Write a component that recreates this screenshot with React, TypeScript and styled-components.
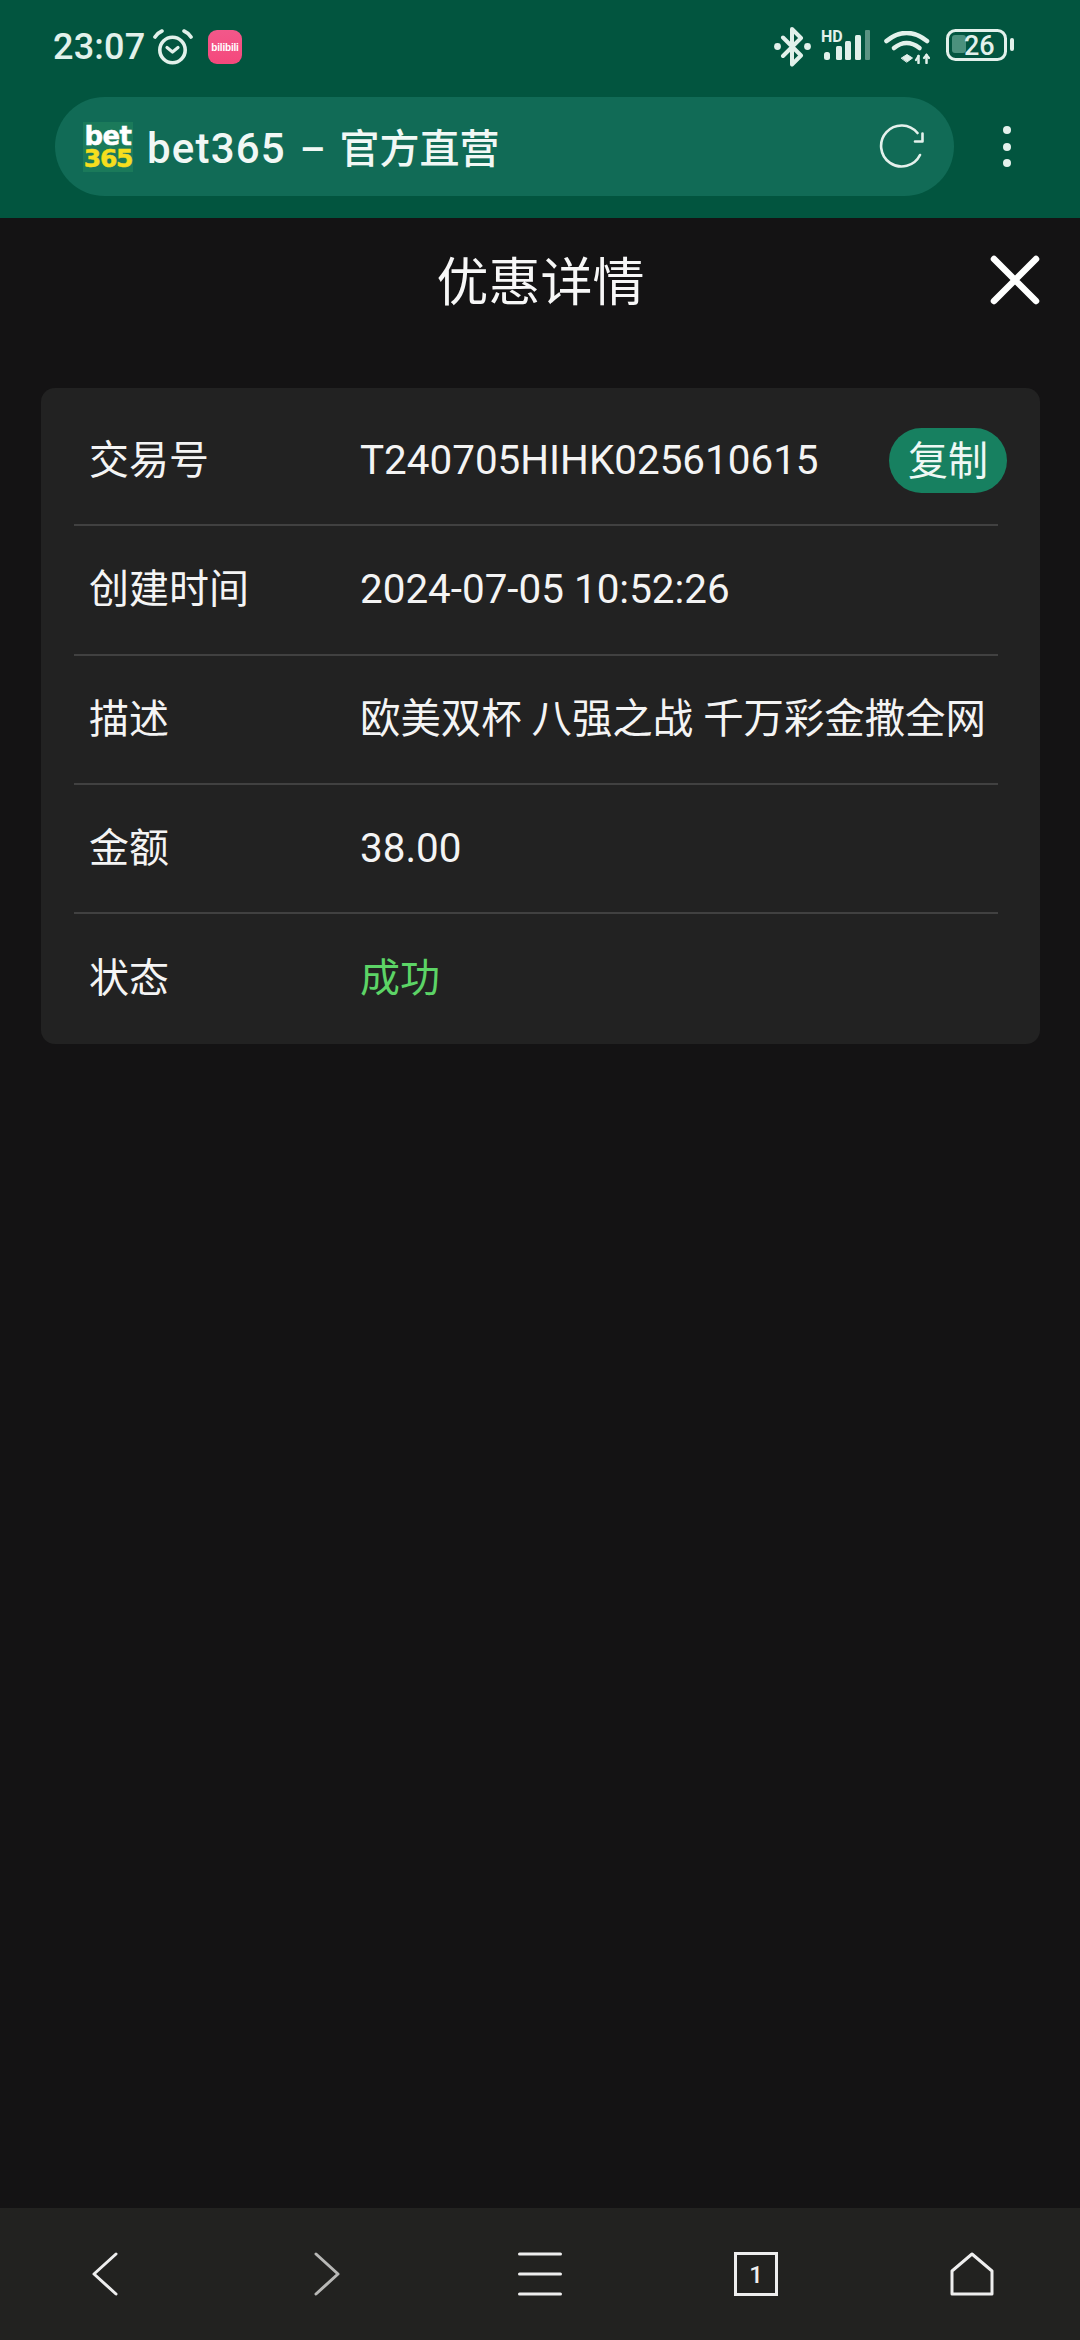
import React from "react";
import styled, { createGlobalStyle } from "styled-components";

const GlobalStyle = createGlobalStyle`
  html, body {
    margin: 0;
    padding: 0;
    background: #141314;
  }
  * {
    box-sizing: border-box;
  }
`;

const Page = styled.div`
  width: 1080px;
  height: 2340px;
  display: flex;
  flex-direction: column;
  background: #141314;
  color: #f4f4f4;
  font-family: Roboto, "Noto Sans CJK SC", sans-serif;
`;

const TopBar = styled.header`
  height: 218px;
  flex: none;
  background: #02553f;
`;

const StatusBar = styled.div`
  height: 97px;
  display: flex;
  align-items: center;
  justify-content: space-between;
  padding: 0 66px 3px 53px;
  color: #e2f1eb;
`;

const StatusGroup = styled.div`
  display: flex;
  align-items: center;
`;

const Clock = styled.span`
  width: 100px;
  font-size: 36px;
  font-weight: 500;
  letter-spacing: 0.2px;
`;

const BiliIcon = styled.div`
  width: 34px;
  height: 34px;
  margin-left: 15px;
  border-radius: 9px;
  display: flex;
  align-items: center;
  justify-content: center;
  background: linear-gradient(#f2588a, #f5487c);
  color: #fff;
  font-family: "Liberation Sans", sans-serif;
  font-size: 10px;
  font-weight: 700;
  letter-spacing: -0.2px;
`;

const SignalWrap = styled.div`
  margin: 0 13px 0 10px;
`;

const BatteryWrap = styled.div`
  margin-left: 16px;
`;

const AddressRow = styled.div`
  display: flex;
  align-items: center;
  padding-left: 55px;
`;

const AddressPill = styled.div`
  width: 899px;
  height: 99px;
  border-radius: 50px;
  background: #116b56;
  display: flex;
  align-items: center;
  padding: 0 29px 0 28px;
`;

const Favicon = styled.div`
  width: 50px;
  height: 50px;
  flex: none;
  background: #1b7a5a;
  display: flex;
  flex-direction: column;
  align-items: center;
  justify-content: center;
  font-family: "DejaVu Sans", sans-serif;
  font-weight: 700;
`;

const LogoLine = styled.span<{ $yellow?: boolean }>`
  font-size: ${(p) => (p.$yellow ? 25 : 26)}px;
  line-height: ${(p) => (p.$yellow ? 21 : 24)}px;
  letter-spacing: ${(p) => (p.$yellow ? -1.2 : -0.6)}px;
  color: ${(p) => (p.$yellow ? "#f6de1e" : "#ffffff")};
  -webkit-text-stroke: 0.5px currentColor;
`;

const PageTitle = styled.span`
  flex: 1;
  margin: 0 0 2px 14px;
  font-size: 40px;
  font-weight: 500;
  word-spacing: 4px;
  color: #f1f8f5;
`;

const SiteName = styled.span`
  font-size: 42px;
  letter-spacing: 1.2px;
`;

const MenuDots = styled.div`
  display: flex;
  flex-direction: column;
  gap: 8.5px;
  margin-left: 49px;
`;

const Dot = styled.i`
  display: block;
  width: 8px;
  height: 8px;
  border-radius: 50%;
  background: #e4f1ec;
`;

const Main = styled.main`
  flex: 1;
  padding: 0 40px 0 41px;
`;

const TitleRow = styled.div`
  height: 124px;
  margin-bottom: 46px;
  display: grid;
  grid-template-columns: 1fr auto 1fr;
  align-items: center;
`;

const Heading = styled.h1`
  grid-column: 2;
  margin: 0 0 4px;
  font-size: 52px;
  font-weight: 400;
  color: #f7f7f7;
`;

const CloseButton = styled.div`
  justify-self: end;
  display: flex;
`;

const Card = styled.section`
  background: #222222;
  border-radius: 14px;
  padding: 9px 42px 0 33px;
`;

const Row = styled.div`
  height: 129.33px;
  display: flex;
  align-items: center;
  padding-left: 15px;
  border-bottom: 2px solid #414141;

  &:last-child {
    border-bottom: 0;
  }
`;

const Label = styled.span`
  width: 271px;
  flex: none;
  margin-top: -7px;
  font-size: 40px;
  color: #f4f4f4;
`;

const Value = styled.span<{ $success?: boolean; $cjk?: boolean }>`
  flex: 1;
  white-space: nowrap;
  margin-top: ${(p) => (p.$cjk ? -7 : 0)}px;
  font-size: ${(p) => (p.$success ? 40 : 40.4)}px;
  color: ${(p) => (p.$success ? "#5cd466" : "#f4f4f4")};
`;

const CopyButton = styled.span`
  width: 118px;
  height: 65px;
  flex: none;
  margin-right: -9px;
  padding-bottom: 5px;
  border-radius: 33px;
  display: flex;
  align-items: center;
  justify-content: center;
  background: #178060;
  font-size: 40px;
  color: #eef8f4;
`;

const BottomBar = styled.nav`
  height: 132px;
  flex: none;
  display: grid;
  grid-template-columns: repeat(5, 1fr);
  align-items: center;
  background: #222220;
`;

const BottomItem = styled.div`
  display: flex;
  justify-content: center;
`;

const AlarmIcon = () => (
  <svg width="40" height="36" viewBox="0 0 40 36" fill="none" stroke="currentColor" strokeLinecap="round" strokeLinejoin="round">
    <circle cx="19.500" cy="21" r="12.700" strokeWidth="3.600" />
    <path d="M14 18.500l5.500 4.500 5.500-4.500" strokeWidth="3.200" />
    <path d="M2 8C3.500 5.500 6 3.300 9 2M38 8C36.500 5.500 34 3.300 31 2" strokeWidth="3.600" />
  </svg>
);

const BluetoothIcon = () => (
  <svg width="37" height="40" viewBox="0 0 37 40" fill="none">
    <path d="M9 10.500l18 18-9 9V2l9 9-18 18" stroke="currentColor" strokeWidth="4" strokeLinejoin="round" strokeLinecap="round" />
    <circle cx="3.500" cy="19.500" r="3.400" fill="currentColor" />
    <circle cx="33.500" cy="19.500" r="3.400" fill="currentColor" />
  </svg>
);

const SignalIcon = () => (
  <svg width="50" height="30" viewBox="0 0 50 30" fill="currentColor">
    <text x="0" y="11.500" fontFamily="Roboto, sans-serif" fontSize="16" fontWeight="700">HD</text>
    <rect x="3" y="22" width="6" height="8" rx="2.500" />
    <rect x="15" y="16" width="6" height="14" rx="1.500" />
    <rect x="24" y="11" width="6" height="19" rx="1.500" />
    <rect x="34" y="5" width="6" height="25" rx="1.500" />
    <rect x="44" y="0" width="5" height="30" rx="1" opacity="0.4" />
  </svg>
);

const WifiIcon = () => (
  <svg width="46" height="33" viewBox="0 0 46 33" fill="none" stroke="currentColor" strokeLinecap="round">
    <path d="M2.500 10Q22.500-6 43 10" strokeWidth="4.600" />
    <path d="M10 17Q22.500 7 35.500 17" strokeWidth="4.600" />
    <path d="M17.500 27l5.500-3.500 5.500 3.500-5.500 4z" fill="currentColor" strokeWidth="1" strokeLinejoin="round" />
    <path d="M34.500 25v7M42.500 24v8" strokeWidth="2.500" />
    <path d="M32 29l2.500-4M40 27l2.500-3 2.500 3" strokeWidth="2.200" />
  </svg>
);

const BatteryIcon = () => (
  <svg width="68" height="32" viewBox="0 0 68 32" fill="none">
    <rect x="1.500" y="1.500" width="58" height="29" rx="8" stroke="currentColor" strokeWidth="3" />
    <rect x="6" y="6" width="14" height="18" rx="3" fill="#4b917d" />
    <rect x="64" y="9" width="4" height="13" rx="2" fill="currentColor" />
    <text x="18" y="26" fill="currentColor" fontFamily="Roboto, sans-serif" fontSize="27" fontWeight="500">26</text>
  </svg>
);

const ReloadIcon = () => (
  <svg width="46" height="46" viewBox="0 0 46 46" fill="none" stroke="#e4f1ec" strokeWidth="2.600" strokeLinecap="round" strokeLinejoin="round">
    <path d="M41 31A20.500 20.500 0 1 1 38.500 9" />
    <path d="M36 17.500h7.500V9.500" />
  </svg>
);

const CloseIcon = () => (
  <svg width="50" height="50" viewBox="0 0 50 50" fill="none" stroke="#ffffff" strokeWidth="6.500" strokeLinecap="round">
    <path d="M4 4l42 42M46 4L4 46" />
  </svg>
);

const BackIcon = () => (
  <svg width="44" height="44" viewBox="0 0 44 44" fill="none" stroke="#eeeeee" strokeWidth="3" strokeLinecap="round" strokeLinejoin="round">
    <path d="M30 2L8 22l22 20" />
  </svg>
);

const ForwardIcon = () => (
  <svg width="44" height="44" viewBox="0 0 44 44" fill="none" stroke="#b8b8b6" strokeWidth="3" strokeLinecap="round" strokeLinejoin="round">
    <path d="M14 2l22 20-22 20" />
  </svg>
);

const ListIcon = () => (
  <svg width="44" height="44" viewBox="0 0 44 44" fill="none" stroke="#eeeeee" strokeWidth="3" strokeLinecap="round">
    <path d="M1.500 2h41M1.500 22h41M1.500 42h41" />
  </svg>
);

const TabsIcon = () => (
  <svg width="44" height="44" viewBox="0 0 44 44" fill="none" stroke="#eeeeee" strokeWidth="3">
    <rect x="1.500" y="1.500" width="41" height="41" />
    <text x="22" y="31" textAnchor="middle" fill="#eeeeee" stroke="none" fontFamily="Roboto, sans-serif" fontSize="24" fontWeight="500">1</text>
  </svg>
);

const HomeIcon = () => (
  <svg width="44" height="44" viewBox="0 0 44 44" fill="none" stroke="#eeeeee" strokeWidth="3" strokeLinejoin="round">
    <path d="M22 2L42 19v23H2V19z" />
  </svg>
);

const rows: { label: string; value: string; copy?: boolean; success?: boolean; cjk?: boolean }[] = [
  { label: "交易号", value: "T240705HIHK025610615", copy: true },
  { label: "创建时间", value: "2024-07-05 10:52:26" },
  { label: "描述", value: "欧美双杯 八强之战 千万彩金撒全网", cjk: true },
  { label: "金额", value: "38.00" },
  { label: "状态", value: "成功", success: true, cjk: true },
];

export default function App(): JSX.Element {
  return (
    <>
      <GlobalStyle />
      <Page>
        <TopBar>
          <StatusBar>
            <StatusGroup>
              <Clock>23:07</Clock>
              <AlarmIcon />
              <BiliIcon>bilibili</BiliIcon>
            </StatusGroup>
            <StatusGroup>
              <BluetoothIcon />
              <SignalWrap>
                <SignalIcon />
              </SignalWrap>
              <WifiIcon />
              <BatteryWrap>
                <BatteryIcon />
              </BatteryWrap>
            </StatusGroup>
          </StatusBar>
          <AddressRow>
            <AddressPill>
              <Favicon>
                <LogoLine>bet</LogoLine>
                <LogoLine $yellow>365</LogoLine>
              </Favicon>
              <PageTitle>
                <SiteName>bet365</SiteName> – 官方直营
              </PageTitle>
              <ReloadIcon />
            </AddressPill>
            <MenuDots>
              <Dot />
              <Dot />
              <Dot />
            </MenuDots>
          </AddressRow>
        </TopBar>

        <Main>
          <TitleRow>
            <Heading>优惠详情</Heading>
            <CloseButton>
              <CloseIcon />
            </CloseButton>
          </TitleRow>
          <Card>
            {rows.map((row) => (
              <Row key={row.label}>
                <Label>{row.label}</Label>
                <Value $success={row.success} $cjk={row.cjk}>{row.value}</Value>
                {row.copy && <CopyButton>复制</CopyButton>}
              </Row>
            ))}
          </Card>
        </Main>

        <BottomBar>
          <BottomItem><BackIcon /></BottomItem>
          <BottomItem><ForwardIcon /></BottomItem>
          <BottomItem><ListIcon /></BottomItem>
          <BottomItem><TabsIcon /></BottomItem>
          <BottomItem><HomeIcon /></BottomItem>
        </BottomBar>
      </Page>
    </>
  );
}
